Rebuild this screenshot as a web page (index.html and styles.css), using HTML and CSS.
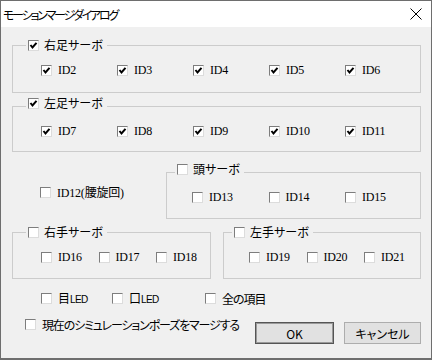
FILE: index.html
```html
<!DOCTYPE html>
<html lang="ja">
<head>
    <meta charset="UTF-8">
    <title>モーションマージダイアログ</title>
    <link rel="stylesheet" href="styles.css">
</head>
<body>
    <div class="window">
        <div class="titlebar">
            <span class="title">モーションマージダイアログ</span>
            <svg class="close" width="12" height="12" viewBox="0 0 12 12">
                <path d="M0.5 0.5L11.5 11.5M11.5 0.5L0.5 11.5" stroke="#000" stroke-width="1"/>
            </svg>
        </div>

        <div class="dialog-body">
            <!-- 右足 -->
            <div class="group group-full leg-right">
                <div class="group-title">
                    <span class="cb"><svg width="9" height="9" viewBox="0 0 9 9"><path d="M1.5 4L3.5 6.5L7.5 1.8" fill="none" stroke="#000" stroke-width="2"/></svg></span>
                    <span class="jp">右足サーボ</span>
                </div>
                <div class="group-row cols-5">
                    <label class="item"><span class="cb"><svg width="9" height="9" viewBox="0 0 9 9"><path d="M1.5 4L3.5 6.5L7.5 1.8" fill="none" stroke="#000" stroke-width="2"/></svg></span><span class="id">ID2</span></label>
                    <label class="item"><span class="cb"><svg width="9" height="9" viewBox="0 0 9 9"><path d="M1.5 4L3.5 6.5L7.5 1.8" fill="none" stroke="#000" stroke-width="2"/></svg></span><span class="id">ID3</span></label>
                    <label class="item"><span class="cb"><svg width="9" height="9" viewBox="0 0 9 9"><path d="M1.5 4L3.5 6.5L7.5 1.8" fill="none" stroke="#000" stroke-width="2"/></svg></span><span class="id">ID4</span></label>
                    <label class="item"><span class="cb"><svg width="9" height="9" viewBox="0 0 9 9"><path d="M1.5 4L3.5 6.5L7.5 1.8" fill="none" stroke="#000" stroke-width="2"/></svg></span><span class="id">ID5</span></label>
                    <label class="item"><span class="cb"><svg width="9" height="9" viewBox="0 0 9 9"><path d="M1.5 4L3.5 6.5L7.5 1.8" fill="none" stroke="#000" stroke-width="2"/></svg></span><span class="id">ID6</span></label>
                </div>
            </div>

            <!-- 左足 -->
            <div class="group group-full leg-left">
                <div class="group-title raised">
                    <span class="cb"><svg width="9" height="9" viewBox="0 0 9 9"><path d="M1.5 4L3.5 6.5L7.5 1.8" fill="none" stroke="#000" stroke-width="2"/></svg></span>
                    <span class="jp">左足サーボ</span>
                </div>
                <div class="group-row cols-5">
                    <label class="item"><span class="cb"><svg width="9" height="9" viewBox="0 0 9 9"><path d="M1.5 4L3.5 6.5L7.5 1.8" fill="none" stroke="#000" stroke-width="2"/></svg></span><span class="id">ID7</span></label>
                    <label class="item"><span class="cb"><svg width="9" height="9" viewBox="0 0 9 9"><path d="M1.5 4L3.5 6.5L7.5 1.8" fill="none" stroke="#000" stroke-width="2"/></svg></span><span class="id">ID8</span></label>
                    <label class="item"><span class="cb"><svg width="9" height="9" viewBox="0 0 9 9"><path d="M1.5 4L3.5 6.5L7.5 1.8" fill="none" stroke="#000" stroke-width="2"/></svg></span><span class="id">ID9</span></label>
                    <label class="item"><span class="cb"><svg width="9" height="9" viewBox="0 0 9 9"><path d="M1.5 4L3.5 6.5L7.5 1.8" fill="none" stroke="#000" stroke-width="2"/></svg></span><span class="id">ID10</span></label>
                    <label class="item"><span class="cb"><svg width="9" height="9" viewBox="0 0 9 9"><path d="M1.5 4L3.5 6.5L7.5 1.8" fill="none" stroke="#000" stroke-width="2"/></svg></span><span class="id">ID11</span></label>
                </div>
            </div>

            <!-- 腰 / 頭 -->
            <div class="middle-row">
                <div class="waist">
                    <label class="item"><span class="cb"></span><span class="id">ID12(<span class="jp">腰旋回</span>)</span></label>
                </div>
                <div class="group head">
                    <div class="group-title near raised">
                        <span class="cb"></span>
                        <span class="jp">頭サーボ</span>
                    </div>
                    <div class="group-row cols-3 wide">
                        <label class="item"><span class="cb"></span><span class="id">ID13</span></label>
                        <label class="item"><span class="cb"></span><span class="id">ID14</span></label>
                        <label class="item"><span class="cb"></span><span class="id">ID15</span></label>
                    </div>
                </div>
            </div>

            <!-- 手 -->
            <div class="hands-row">
                <div class="group hand-right">
                    <div class="group-title">
                        <span class="cb"></span>
                        <span class="jp">右手サーボ</span>
                    </div>
                    <div class="group-row cols-3">
                        <label class="item"><span class="cb"></span><span class="id">ID16</span></label>
                        <label class="item"><span class="cb"></span><span class="id">ID17</span></label>
                        <label class="item"><span class="cb"></span><span class="id">ID18</span></label>
                    </div>
                </div>
                <div class="group hand-left">
                    <div class="group-title near">
                        <span class="cb"></span>
                        <span class="jp">左手サーボ</span>
                    </div>
                    <div class="group-row cols-3">
                        <label class="item"><span class="cb"></span><span class="id">ID19</span></label>
                        <label class="item"><span class="cb"></span><span class="id">ID20</span></label>
                        <label class="item"><span class="cb"></span><span class="id">ID21</span></label>
                    </div>
                </div>
            </div>

            <div class="options-row">
                <label class="item"><span class="cb"></span><span class="jp">目<span class="led">LED</span></span></label>
                <label class="item"><span class="cb"></span><span class="jp">口<span class="led">LED</span></span></label>
                <label class="item"><span class="cb"></span><span class="jp tight">全の項目</span></label>
            </div>

            <div class="footer-row">
                <label class="item"><span class="cb"></span><span class="jp narrow">現在のシミュレーションポーズをマージする</span></label>
                <div class="buttons">
                    <button class="btn btn-default">OK</button>
                    <button class="btn">キャンセル</button>
                </div>
            </div>
        </div>
    </div>
</body>
</html>
```

FILE: styles.css
```css
body {
    margin: 0;
    font-family: "Noto Sans CJK JP", sans-serif;
    font-size: 12px;
    color: #000;
}
.window {
    width: 432px;
    height: 360px;
    box-sizing: border-box;
    border: 1px solid #6e6e6e;
    border-bottom-width: 2px;
    background: #f0f0f0;
    display: flex;
    flex-direction: column;
}
.titlebar {
    height: 26px;
    flex: none;
    background: #fff;
    display: flex;
    align-items: center;
    justify-content: space-between;
    padding: 0 9px 0 2px;
}
.title {
    font-feature-settings: "palt";
    font-size: 12px;
    line-height: 14px;
    letter-spacing: -2.2px;
    padding-top: 2px;
}
.dialog-body {
    flex: 1;
    padding: 0 10px 0 11px;
}
.jp {
    font-family: "Noto Sans CJK JP", sans-serif;
    font-feature-settings: "palt";
    font-size: 12px;
}
.jp.narrow {
    letter-spacing: -1.15px;
}
.jp.tight {
    letter-spacing: -1px;
}
.id {
    font-family: "Liberation Serif", "Noto Sans CJK JP", serif;
    font-size: 12px;
    letter-spacing: -0.2px;
}
.led {
    font-family: "Liberation Sans", sans-serif;
    font-size: 10px;
    letter-spacing: -0.6px;
}

/* checkbox */
.cb {
    width: 11px;
    height: 11px;
    box-sizing: border-box;
    flex: none;
    background: #fff;
    border: 1px solid;
    border-color: #7d7d7d #dcdcdc #dcdcdc #7d7d7d;
    display: flex;
    align-items: center;
    justify-content: center;
}
.item {
    display: flex;
    align-items: center;
    gap: 6px;
    height: 13px;
    line-height: 13px;
    white-space: nowrap;
}

/* group boxes */
.group {
    border: 1px solid #cccccc;
    box-sizing: border-box;
}
.group-title {
    display: flex;
    align-items: center;
    gap: 5px;
    width: max-content;
    height: 12px;
    line-height: 12px;
    margin: -7px 0 -5px 13px;
    padding: 0 4px 0 2px;
    background: #f0f0f0;
}
.group-title.near {
    margin-left: 8px;
}
.group-title.raised {
    margin-top: -10px;
    margin-bottom: -2px;
}
.group-row {
    display: grid;
    margin-top: 18px;
    height: 13px;
    padding-left: 28px;
}
.cols-5 {
    grid-template-columns: repeat(5, 76px);
}
.cols-3 {
    grid-template-columns: repeat(3, 57.5px);
}
.cols-3.wide {
    grid-template-columns: repeat(3, 76.5px);
}
.leg-right {
    margin-top: 18px;
    height: 48px;
}
.leg-left {
    margin-top: 13px;
    height: 46px;
}

.middle-row {
    display: flex;
}
.waist {
    width: 154px;
    padding: 34px 0 0 28px;
    box-sizing: border-box;
}
.head {
    width: 255px;
    height: 47px;
    margin-top: 20px;
}
.head .group-row {
    padding-left: 25px;
}

.hands-row {
    display: flex;
    gap: 12px;
    margin-top: 13px;
}
.hand-right {
    width: 199px;
    height: 47px;
}
.hand-left {
    width: 198px;
    height: 47px;
}
.hand-left .group-row {
    padding-left: 25px;
}

.options-row {
    display: grid;
    grid-template-columns: 71px 93px auto;
    margin-top: 13px;
    padding-left: 29px;
}
.footer-row {
    display: flex;
    align-items: flex-start;
    margin-top: 13px;
    padding-left: 13px;
}
.buttons {
    display: flex;
    gap: 10px;
    margin-left: auto;
    margin-top: 4px;
}
.btn {
    height: 22px;
    width: 77px;
    padding: 0;
    background: #e1e1e1;
    border: 1px solid #adadad;
    font-family: "Noto Sans CJK JP", sans-serif;
    font-feature-settings: "palt";
    font-size: 12px;
    color: #000;
}
.btn-default {
    width: 79px;
    border: 1px solid #555;
    box-shadow: inset 0 0 0 1px #9a9a9a;
}
```
